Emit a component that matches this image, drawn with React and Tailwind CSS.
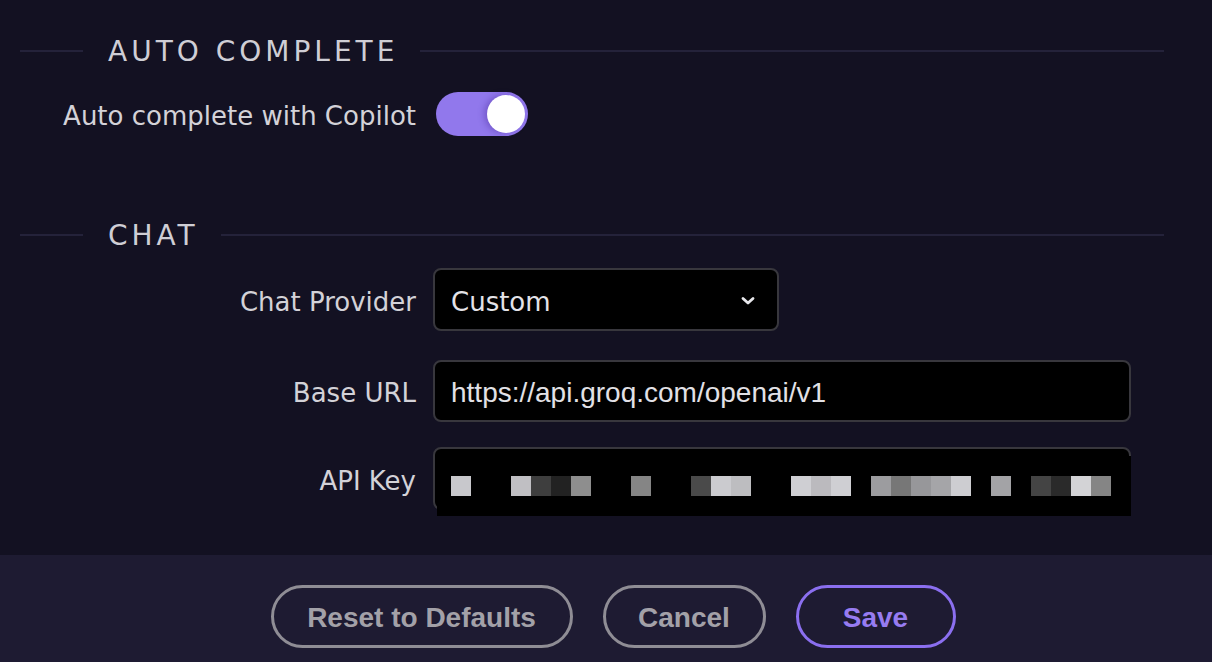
import React from "react";

const labelFont = { fontFamily: '"DejaVu Sans", Verdana, sans-serif' };

function SectionHeading({ children }) {
  return (
    <div className="flex items-center h-[32px]">
      <div className="w-[63px] h-[2px] bg-[#24223a]" />
      <div
        className="pl-[25px] pr-[22px] pt-[2px] text-[28px] leading-[32px] tracking-[4px] text-[#cfced5] font-normal"
        style={labelFont}
      >
        {children}
      </div>
      <div className="flex-1 h-[2px] bg-[#24223a]" />
    </div>
  );
}

const squares = [
  [0, "#c8c8cc"],
  [3, "#c0bfc3"],
  [4, "#3e3e3e"],
  [5, "#222222"],
  [6, "#8e8e8e"],
  [9, "#858585"],
  [12, "#4a4a4a"],
  [13, "#cbcbcf"],
  [14, "#bdbdc0"],
  [17, "#cfcfd3"],
  [18, "#bbbabe"],
  [19, "#cfcfd3"],
  [21, "#9c9c9f"],
  [22, "#777777"],
  [23, "#97979a"],
  [24, "#a5a5a8"],
  [25, "#cdcdd1"],
  [27, "#a3a3a6"],
  [29, "#444444"],
  [30, "#2a2a2a"],
  [31, "#d3d3d6"],
  [32, "#858585"],
];

function Label({ children, className = "" }) {
  return (
    <div
      className={"w-[396px] shrink-0 pt-[5px] text-right text-[26px] text-[#d3d2d8] " + className}
      style={labelFont}
    >
      {children}
    </div>
  );
}

export default function App() {
  return (
    <div className="w-[1212px] h-[662px] bg-[#131122] flex flex-col overflow-hidden">
      <div className="flex-1 pl-[20px] pr-[48px] pt-[35px]">
        <SectionHeading>AUTO COMPLETE</SectionHeading>

        <div className="flex items-center mt-[25px] h-[44px]">
          <Label>Auto complete with Copilot</Label>
          <div className="ml-[20px] w-[92px] h-[44px] rounded-full bg-[#9178ec] relative">
            <div className="absolute right-[3px] top-[3px] w-[38px] h-[38px] rounded-full bg-white shadow-[-3px_0_6px_rgba(60,30,140,0.35)]" />
          </div>
        </div>

        <div className="mt-[83px]">
          <SectionHeading>CHAT</SectionHeading>
        </div>

        <div className="flex items-center mt-[17px]">
          <Label>Chat Provider</Label>
          <div className="ml-[17px] w-[346px] h-[63px] rounded-[8px] border-2 border-[#38373d] bg-black flex items-center justify-between pl-[16px] pr-[22px]">
            <span className="pt-[5px] text-[26px] text-[#e4e3e8]" style={labelFont}>
              Custom
            </span>
            <svg width="14" height="10" viewBox="0 0 14 10" className="mt-[2px]">
              <polyline
                points="2,2.5 7,7 12,2.5"
                fill="none"
                stroke="#e8e8ec"
                strokeWidth="2.8"
                strokeLinecap="round"
                strokeLinejoin="round"
              />
            </svg>
          </div>
        </div>

        <div className="flex items-center mt-[29px]">
          <Label>Base URL</Label>
          <div className="ml-[17px] w-[698px] h-[62px] rounded-[8px] border-2 border-[#38373d] bg-black flex items-center pl-[16px]">
            <span
              className="pt-[3px] text-[28px] text-[#e2e1e6]"
              style={{ fontFamily: '"Liberation Sans", Arial, sans-serif' }}
            >
              https://api.groq.com/openai/v1
            </span>
          </div>
        </div>

        <div className="flex items-center mt-[25px]">
          <Label>API Key</Label>
          <div className="ml-[17px] w-[698px] h-[63px] rounded-[8px] border-2 border-[#38373d] bg-black relative">
            <div className="absolute left-[2px] top-[7px] w-[694px] h-[60px] bg-black flex items-center pl-[14px]">
              <div className="relative h-[20px] w-[680px]">
                {squares.map(([i, c]) => (
                  <div
                    key={i}
                    className="absolute top-0 w-[20px] h-[20px]"
                    style={{ left: i * 20, backgroundColor: c }}
                  />
                ))}
              </div>
            </div>
          </div>
        </div>
      </div>

      <div
        className="h-[107px] bg-[#1e1b32] flex justify-center items-start pt-[30px] pl-[14px] gap-[30px]"
        style={{ fontFamily: '"Liberation Sans", Arial, sans-serif' }}
      >
        <button className="w-[302px] h-[63px] pt-[3px] rounded-full border-[3px] border-[#8f8d95] text-[#a3a1a8] text-[28px] font-bold">
          Reset to Defaults
        </button>
        <button className="w-[163px] h-[63px] pt-[3px] rounded-full border-[3px] border-[#8f8d95] text-[#a3a1a8] text-[28px] font-bold">
          Cancel
        </button>
        <button className="w-[160px] h-[63px] pt-[3px] rounded-full border-[3px] border-[#8b6ff0] text-[#977cf1] text-[28px] font-bold">
          Save
        </button>
      </div>
    </div>
  );
}
